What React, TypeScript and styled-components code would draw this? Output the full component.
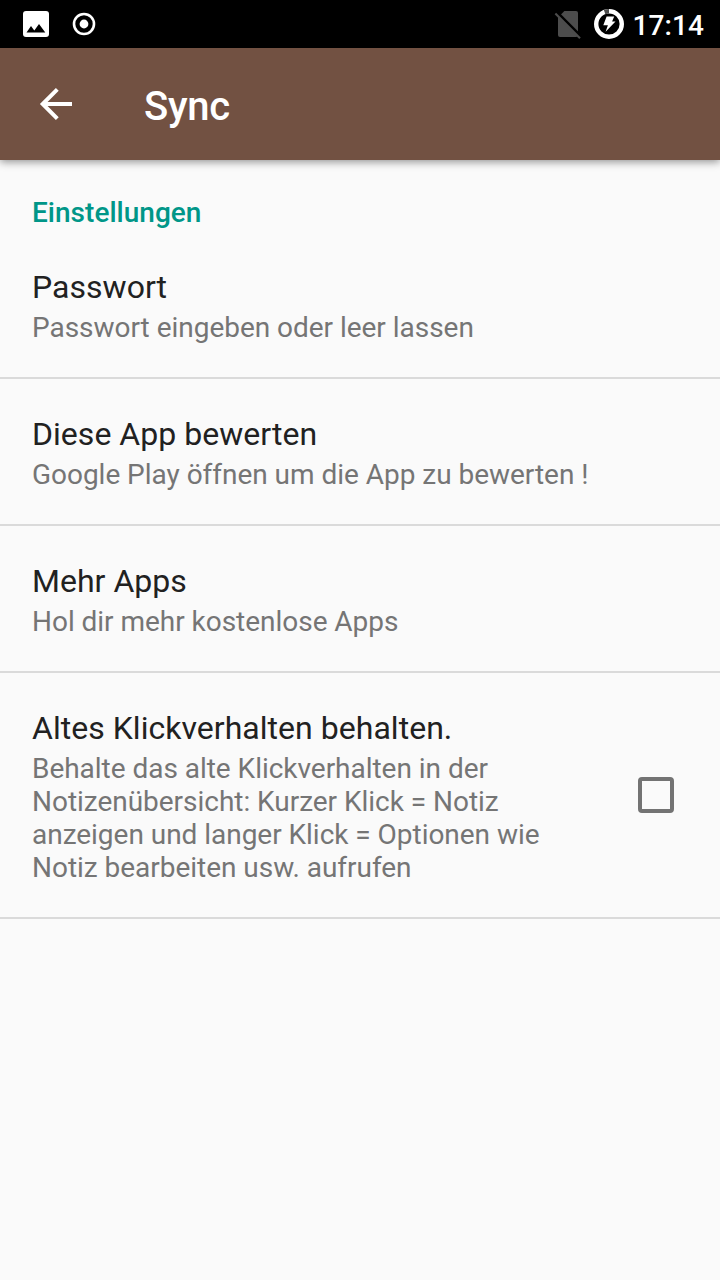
import React from "react";
import styled, { createGlobalStyle } from "styled-components";

const GlobalStyle = createGlobalStyle`
  *, *::before, *::after { box-sizing: border-box; }
  body { margin: 0; background: #fafafa; }
`;

const Screen = styled.div`
  display: flex;
  flex-direction: column;
  width: 720px;
  height: 1280px;
  background: #fafafa;
  font-family: Roboto, sans-serif;
  overflow: hidden;
`;

const StatusBar = styled.div`
  display: flex;
  align-items: center;
  justify-content: space-between;
  flex: none;
  height: 48px;
  padding: 0 16px 0 20px;
  background: #000;
  color: #fff;
`;

const StatusGroup = styled.div<{ $gap: number }>`
  display: flex;
  align-items: center;
  gap: ${(p) => p.$gap}px;

  svg { display: block; flex: none; }
`;

const Clock = styled.span`
  margin-left: -2px;
  padding-top: 3px;
  font-size: 28px;
  font-weight: 500;
  line-height: 33px;
  letter-spacing: 0.1px;
`;

const Toolbar = styled.header`
  display: flex;
  align-items: center;
  flex: none;
  height: 112px;
  padding: 0 32px;
  background: #725142;
  color: #fff;
  box-shadow: 0 2px 8px rgba(0, 0, 0, 0.42);
`;

const BackButton = styled.button`
  display: flex;
  width: 48px;
  height: 48px;
  padding: 0;
  border: 0;
  background: none;
  color: inherit;
`;

const Title = styled.h1`
  margin: 0 0 0 64px;
  padding-top: 5px;
  font-size: 40px;
  font-weight: 500;
  line-height: 47px;
  letter-spacing: -0.25px;
`;

const CategoryTitle = styled.h2`
  margin: 0;
  padding: 36px 32px 3px;
  color: #009688;
  font-size: 28px;
  font-weight: 500;
  line-height: 33px;
  letter-spacing: 0.02px;
`;

const Row = styled.div`
  display: flex;
  align-items: center;
  justify-content: space-between;
  padding: 36px 46px 33px 32px;
  border-bottom: 2px solid #dadada;
`;

const RowTitle = styled.div`
  color: #212121;
  font-size: 32px;
  line-height: 38px;
  letter-spacing: 0.03px;
`;

const Summary = styled.div`
  max-width: 560px;
  margin-top: 5px;
  color: #757575;
  font-size: 28px;
  line-height: 33px;
  letter-spacing: -0.03px;
`;

const Checkbox = styled.span`
  flex: none;
  width: 36px;
  height: 36px;
  margin-bottom: 3px;
  border: 4px solid #737373;
  border-radius: 4px;
`;

interface Preference {
  title: string;
  summary: string;
  checkable?: boolean;
}

const preferences: Preference[] = [
  { title: "Passwort", summary: "Passwort eingeben oder leer lassen" },
  { title: "Diese App bewerten", summary: "Google Play öffnen um die App zu bewerten !" },
  { title: "Mehr Apps", summary: "Hol dir mehr kostenlose Apps" },
  {
    title: "Altes Klickverhalten behalten.",
    summary:
      "Behalte das alte Klickverhalten in der Notizenübersicht: Kurzer Klick = Notiz anzeigen und langer Klick = Optionen wie Notiz bearbeiten usw. aufrufen",
    checkable: true,
  },
];

const PictureIcon = () => (
  <svg width="32" height="32" viewBox="0 0 32 32">
    <rect x="3" y="3" width="26" height="26" rx="3" fill="#fff" />
    <path d="M6.5 24.5 11 18l3.3 4.4L19 16l6.3 8.5z" fill="#000" />
  </svg>
);

const RecordIcon = () => (
  <svg width="32" height="32" viewBox="0 0 32 32">
    <circle cx="16" cy="16" r="10" fill="none" stroke="#fff" strokeWidth="2.6" />
    <circle cx="16" cy="16" r="4.4" fill="#fff" />
  </svg>
);

const NoSimIcon = () => (
  <svg width="32" height="32" viewBox="0 0 32 32">
    <path d="M12.4 3H24a2 2 0 0 1 2 2v22a2 2 0 0 1-2 2H8a2 2 0 0 1-2-2V9.4z" fill="#4d4d4d" />
    <path d="M4.2 3.6 29.6 29" stroke="#000" strokeWidth="2.8" />
    <path d="M3.4 5.6 28 30.2" stroke="#4d4d4d" strokeWidth="2.1" />
  </svg>
);

const BatteryIcon = () => (
  <svg width="32" height="32" viewBox="0 0 32 32">
    <circle cx="16" cy="16" r="12.8" fill="none" stroke="#fff" strokeWidth="4.4" />
    <path d="M11.6 3.98A12.8 12.8 0 0 1 16 3.2" fill="none" stroke="#4d4d4d" strokeWidth="4.6" />
    <path d="M13.6 8.6h7.6l-2.1 5h3.4L12.6 23.8l2.3-6.5h-4.6z" fill="#fff" />
  </svg>
);

const BackIcon = () => (
  <svg width="48" height="48" viewBox="0 0 48 48">
    <path d="M40 24H11M25.3 9.4 10.7 24l14.6 14.6" fill="none" stroke="#fff" strokeWidth="4" />
  </svg>
);

export default function App() {
  return (
    <Screen>
      <GlobalStyle />
      <StatusBar>
        <StatusGroup $gap={16}>
          <PictureIcon />
          <RecordIcon />
        </StatusGroup>
        <StatusGroup $gap={9}>
          <NoSimIcon />
          <BatteryIcon />
          <Clock>17:14</Clock>
        </StatusGroup>
      </StatusBar>
      <Toolbar>
        <BackButton aria-label="Zurück">
          <BackIcon />
        </BackButton>
        <Title>Sync</Title>
      </Toolbar>
      <main>
        <CategoryTitle>Einstellungen</CategoryTitle>
        {preferences.map((item) => (
          <Row key={item.title}>
            <div>
              <RowTitle>{item.title}</RowTitle>
              <Summary>{item.summary}</Summary>
            </div>
            {item.checkable && <Checkbox role="checkbox" aria-checked={false} />}
          </Row>
        ))}
      </main>
    </Screen>
  );
}
